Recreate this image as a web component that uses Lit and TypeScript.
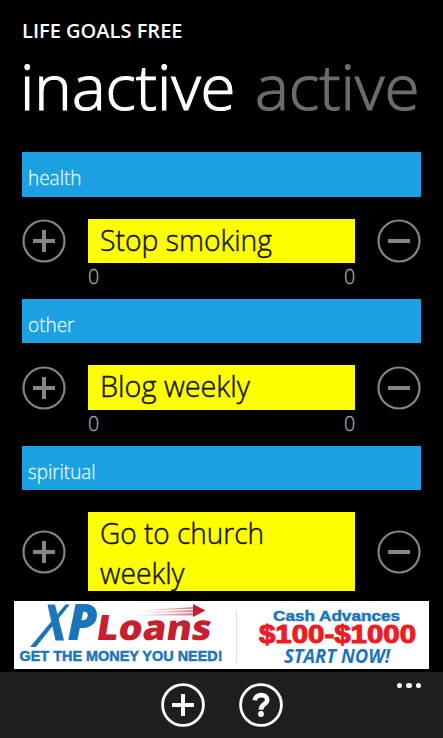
import { LitElement, html, css, svg } from "lit";
import { customElement, property } from "lit/decorators.js";

interface Line { text: string; width: number }
interface Goal { category: Line; lines: Line[]; counted: boolean }

const goals: Goal[] = [
  { category: { text: "health", width: 53.5 }, lines: [{ text: "Stop smoking", width: 172 }], counted: true },
  { category: { text: "other", width: 46.5 }, lines: [{ text: "Blog weekly", width: 150 }], counted: true },
  { category: { text: "spiritual", width: 67.5 }, lines: [{ text: "Go to church", width: 164 }, { text: "weekly", width: 84.5 }], counted: false },
];

/* One line of text set to a given advance width. */
@customElement("fit-text")
class FitText extends LitElement {
  @property() text = "";
  @property({ type: Number }) width = 0;
  @property({ type: Number }) height = 0;
  @property({ type: Number }) baseline = 0;
  static styles = css`
    :host { display: block; }
    svg { display: block; overflow: visible; fill: currentColor; stroke: currentColor; stroke-width: var(--weight, .3px); }
  `;
  render() {
    return html`<svg width=${this.width} height=${this.height}>
      <text x="0" y=${this.baseline} textLength=${this.width} lengthAdjust="spacingAndGlyphs">${this.text}</text>
    </svg>`;
  }
}

@customElement("round-button")
class RoundButton extends LitElement {
  @property() kind = "plus";
  @property({ type: Boolean, reflect: true }) bold = false;
  static styles = css`
    :host { display: block; width: 44px; height: 44px; color: #858585; }
    :host([bold]) { color: #fff; }
    svg { display: block; fill: none; stroke: currentColor; }
    .ring { stroke-width: 2.2; }
    :host([bold]) .ring { stroke-width: 2.8; }
    .bar { stroke-width: 4; }
    .hook { stroke-width: 4.6; }
    .dot { fill: currentColor; stroke: none; }
  `;
  render() {
    const glyph =
      this.kind === "plus" ? svg`<path class="bar" d="M11 22H33M22 11V33"/>` :
      this.kind === "minus" ? svg`<path class="bar" d="M11 22H33"/>` :
      svg`<path class="hook" d="M15.800 17.300C16.500 10.500 28.200 10.300 28.200 17C28.200 21.400 22 20.500 22 26.800"/><circle class="dot" cx="22" cy="31" r="2.9"/>`;
    return html`<svg width="44" height="44" viewBox="0 0 44 44">
      <circle class="ring" cx="22" cy="22" r=${this.bold ? 20.4 : 20.5}></circle>${glyph}
    </svg>`;
  }
}

@customElement("ad-banner")
class AdBanner extends LitElement {
  static styles = css`
    :host { display: block; background: #fff; height: 68.5px; }
    svg { display: block; overflow: visible; font-family: "Open Sans", sans-serif; }
    .blue { fill: #1b75bc; }
    .red { fill: #c4202f; }
    .hot { fill: #ed1c24; stroke: #ed1c24; stroke-width: 1.1; }
    .xp { font-weight: 800; font-style: italic; font-size: 50px; }
    .loans { font-weight: 800; font-size: 35px; }
    .wide { font-family: "Liberation Sans", sans-serif; font-weight: 700; stroke: #1b75bc; stroke-width: .5; }
    .tag { font-size: 14.5px; }
    .cash { font-size: 15.5px; }
    .price { font-family: "Liberation Sans", sans-serif; font-weight: 700; font-size: 26px; }
    .start { font-weight: 700; font-style: italic; font-size: 19px; }
    .rule { stroke: #ddd; }
  `;
  render() {
    return html`<svg width="415" height="68" viewBox="0 0 415 68">
      <defs><linearGradient id="trail"><stop offset="0" stop-color="#fff"/><stop offset="1" stop-color="#dc7b85"/></linearGradient></defs>
      <path class="blue" d="M33.500 3.500H41L50 39.500H41.500Z"/>
      <path class="blue" d="M51.500 3.500H55.800L22 46H16Z"/>
      <text class="blue xp" x="53.500" y="39.300" textLength="30" lengthAdjust="spacingAndGlyphs">P</text>
      <text class="red loans" transform="translate(81 39.300) skewX(-9)" textLength="115" lengthAdjust="spacingAndGlyphs">Loans</text>
      <path d="M110 10.500L180 6V7.800ZM120 12L180 9V11ZM110 14.500L180 12V14.500Z" fill="url(#trail)"/>
      <path class="red" d="M179 3L191.500 9.500L179 16Z"/>
      <text class="blue wide tag" x="5.500" y="60" textLength="203" lengthAdjust="spacingAndGlyphs">GET THE MONEY YOU NEED!</text>
      <path class="rule" d="M222.500 9V62"/>
      <text class="blue wide cash" x="259" y="19.500" textLength="127" lengthAdjust="spacingAndGlyphs">Cash Advances</text>
      <text class="hot price" x="245" y="41.500" textLength="157" lengthAdjust="spacingAndGlyphs">$100-$1000</text>
      <text class="blue start" x="270" y="62.300" textLength="106" lengthAdjust="spacingAndGlyphs">START NOW!</text>
    </svg>`;
  }
}

@customElement("app-root")
class AppRoot extends LitElement {
  static styles = css`
    :host { display: flex; flex-direction: column; width: 443px; height: 738px; overflow: hidden;
      background: #000; color: #fff; font-family: "Open Sans", "Noto Sans", sans-serif; font-weight: 300; }
    .title { padding: 18px 0 0 21.500px; font-size: 20px; font-weight: 600; --weight: 0; }
    .pivot { display: flex; gap: 20px; padding-left: 19.500px; height: 108.300px; font-size: 63px; --weight: 1.2px; }
    .off { color: #6c6c6c; }
    .list { flex: none; height: 448.700px; overflow: hidden; }
    .group { margin: 0 22.300px 0 22px; height: 146.700px; }
    .category { box-sizing: border-box; height: 44.300px; padding-left: 5.500px; background: #1ba1e2; font-size: 20px; color: #e4f8ff; }
    .row { display: grid; grid-template-columns: 44.300px 266.400px 44px; column-gap: 22px; align-items: center; margin-top: 22.200px; }
    .goal { background: #ff0; color: #111; font-size: 29.500px; padding-left: 12px; --weight: .45px; }
    .goal.one { height: 44.300px; }
    .goal.two { height: 79.200px; }
    .counts { display: flex; justify-content: space-between; margin: 0 66px 0 66px; font-size: 19.500px; color: #aaa; }
    .ad { flex: none; margin: 0 14px; }
    .bar { flex: 1; margin-top: 2.500px; background: #1f1f1f; display: grid; grid-template-columns: 160.500px 44px 44px 1fr; column-gap: 0; }
    .bar round-button { margin-top: 11.200px; }
    .add { grid-column: 2; }
    .help { margin-left: 34px; }
    .more { display: flex; gap: 4.200px; justify-content: flex-end; padding: 10.800px 22px 0 0; }
    .more i { width: 5.200px; height: 5.200px; border-radius: 50%; background: #fff; }
  `;
  private line(l: Line, height: number, baseline: number) {
    return html`<fit-text .text=${l.text} .width=${l.width} .height=${height} .baseline=${baseline}></fit-text>`;
  }
  render() {
    return html`
      <div class="title">${this.line({ text: "LIFE GOALS FREE", width: 160.5 }, 26, 20.2)}</div>
      <div class="pivot">
        ${this.line({ text: "inactive", width: 215.5 }, 90, 65.5)}
        <span class="off">${this.line({ text: "active", width: 164.5 }, 90, 65.5)}</span>
      </div>
      <div class="list">
        ${goals.map((g) => html`<section class="group">
          <div class="category">${this.line(g.category, 44, 33)}</div>
          <div class="row">
            <round-button kind="plus"></round-button>
            <div class="goal ${g.lines.length > 1 ? "two" : "one"}">
              ${g.lines.map((l) => this.line(l, 40, 31.9))}
            </div>
            <round-button kind="minus"></round-button>
          </div>
          ${g.counted ? html`<div class="counts">
            ${this.line({ text: "0", width: 11.2 }, 26, 20.5)}${this.line({ text: "0", width: 11.2 }, 26, 20.5)}
          </div>` : ""}
        </section>`)}
      </div>
      <ad-banner class="ad"></ad-banner>
      <div class="bar">
        <round-button class="add" bold kind="plus"></round-button>
        <round-button class="help" bold kind="help"></round-button>
        <div class="more"><i></i><i></i><i></i></div>
      </div>`;
  }
}
